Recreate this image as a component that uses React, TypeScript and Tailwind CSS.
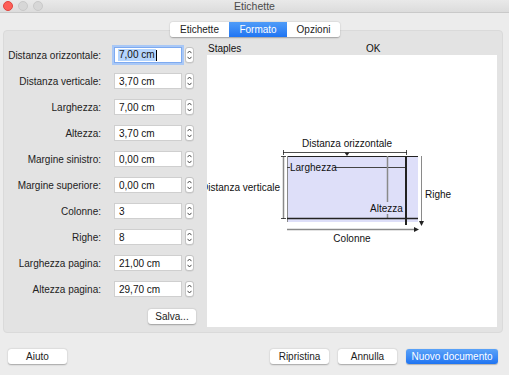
import React from 'react'

const rows = [
  { label: 'Distanza orizzontale:', value: '7,00 cm', focused: true },
  { label: 'Distanza verticale:', value: '3,70 cm' },
  { label: 'Larghezza:', value: '7,00 cm' },
  { label: 'Altezza:', value: '3,70 cm' },
  { label: 'Margine sinistro:', value: '0,00 cm' },
  { label: 'Margine superiore:', value: '0,00 cm' },
  { label: 'Colonne:', value: '3' },
  { label: 'Righe:', value: '8' },
  { label: 'Larghezza pagina:', value: '21,00 cm' },
  { label: 'Altezza pagina:', value: '29,70 cm' },
]

function Spinner() {
  return (
    <div className="ml-[3px] flex h-[16px] w-[9px] flex-col items-center justify-between rounded-[3px] border border-[#c4c4c4] bg-white py-[2px] shadow-[0_0.5px_0.5px_rgba(0,0,0,0.1)]">
      <svg width="5" height="4" viewBox="0 0 5 4">
        <path d="M0.5 3.2 L2.5 1 L4.5 3.2" fill="none" stroke="#333" strokeWidth="0.9" />
      </svg>
      <svg width="5" height="4" viewBox="0 0 5 4">
        <path d="M0.5 0.8 L2.5 3 L4.5 0.8" fill="none" stroke="#333" strokeWidth="0.9" />
      </svg>
    </div>
  )
}

function Field({ label, value, focused }: { label: string; value: string; focused?: boolean }) {
  return (
    <div className="flex h-[16px] items-center">
      <div className="w-[97px] text-right text-[10px] text-[#222]">{label}</div>
      <div
        className={
          focused
            ? 'ml-[13px] flex h-[16px] w-[68px] items-center border border-[#7eaaf0] bg-white pl-[3px] text-[10px] text-[#111] ring-2 ring-[#a9c8f6]'
            : 'ml-[13px] flex h-[16px] w-[68px] items-center border border-[#cfcfcf] bg-white pl-[4px] text-[10px] text-[#111]'
        }
      >
        {focused ? (
          <>
            <span className="bg-[#b5d5fd] px-[1px] leading-[12px]">{value}</span>
            <span className="h-[11px] w-[1px] bg-black" />
          </>
        ) : (
          value
        )}
      </div>
      <Spinner />
    </div>
  )
}

function Diagram() {
  const gray = '#8a8a8a'
  const dark = '#222'
  return (
    <svg width="290" height="272" viewBox="0 0 290 272" className="block" fontFamily="'Liberation Sans', Arial, sans-serif" fontSize="10" fill="#111">
      <rect x="80" y="101" width="131" height="66" fill="#dedff9" />
      <line x1="80" y1="101.5" x2="211" y2="101.5" stroke={dark} strokeWidth="1" />
      <line x1="80.5" y1="101" x2="80.5" y2="167" stroke={gray} strokeWidth="1" />

      {/* Distanza orizzontale */}
      <text x="140" y="92" textAnchor="middle">Distanza orizzontale</text>
      <line x1="76" y1="97.5" x2="200" y2="97.5" stroke={dark} strokeWidth="0.8" />
      <line x1="76.5" y1="95" x2="76.5" y2="100" stroke={dark} strokeWidth="0.8" />
      <line x1="199.5" y1="95" x2="199.5" y2="100" stroke={dark} strokeWidth="0.8" />
      <path d="M137.5 97.5 L142.5 97.5 L140 101 Z" fill={dark} />

      {/* Distanza verticale */}
      <line x1="76.5" y1="101" x2="76.5" y2="164" stroke={gray} strokeWidth="1.5" />
      <line x1="74" y1="101.5" x2="79" y2="101.5" stroke={dark} strokeWidth="0.8" />
      <line x1="74" y1="163.5" x2="79" y2="163.5" stroke={dark} strokeWidth="0.8" />
      <text x="73" y="136" textAnchor="end">Distanza verticale</text>

      {/* Larghezza */}
      <line x1="80" y1="112.5" x2="83" y2="112.5" stroke="#444" strokeWidth="1" />
      <line x1="127" y1="112.5" x2="198" y2="112.5" stroke="#444" strokeWidth="1" />
      <text x="83" y="116">Larghezza</text>

      {/* vertical lines */}
      <line x1="180.5" y1="101" x2="180.5" y2="163" stroke={gray} strokeWidth="1.5" />
      <rect x="162" y="147" width="35" height="12" fill="#dedff9" />
      <text x="163" y="157">Altezza</text>
      <line x1="199" y1="101" x2="199" y2="170" stroke={dark} strokeWidth="2" />
      <line x1="80" y1="163.5" x2="211" y2="163.5" stroke={dark} strokeWidth="1.5" />

      {/* Righe */}
      <line x1="214.5" y1="101" x2="214.5" y2="167" stroke={gray} strokeWidth="1" />
      <path d="M212 166 L217 166 L214.5 171 Z" fill={dark} />
      <text x="218" y="143">Righe</text>

      {/* Colonne */}
      <line x1="80" y1="174.5" x2="208" y2="174.5" stroke={gray} strokeWidth="1.5" />
      <path d="M207 172 L212 174.5 L207 177 Z" fill={dark} />
      <text x="145" y="187" textAnchor="middle">Colonne</text>
    </svg>
  )
}

function Button({ children, primary, className }: { children: React.ReactNode; primary?: boolean; className?: string }) {
  return (
    <div
      className={
        (primary
          ? 'bg-gradient-to-b from-[#5aa2f8] to-[#1f74f2] text-white shadow-[0_0.5px_1px_rgba(0,0,0,0.25)] '
          : 'bg-white text-[#222] shadow-[0_0.5px_1.5px_rgba(0,0,0,0.3)] ') +
        'flex h-[15px] items-center justify-center rounded-[3px] text-[10px] ' +
        (className ?? '')
      }
    >
      {children}
    </div>
  )
}

export default function App() {
  return (
    <div className="flex h-[375px] w-[509px] flex-col overflow-hidden bg-[#ececec] font-['Liberation_Sans',Arial,sans-serif]">
      {/* title bar */}
      <div className="relative flex h-[13px] items-center justify-center border-b border-[#c9c9c9] bg-gradient-to-b from-[#e9e9e9] to-[#dcdcdc]">
        <div className="absolute left-[3px] top-[1px] flex gap-[5px]">
          <div className="h-[10px] w-[10px] rounded-full border border-[#e0443e] bg-[#fd5f57]" />
          <div className="h-[10px] w-[10px] rounded-full border border-[#c9c9c9] bg-[#d7d7d7]" />
          <div className="h-[10px] w-[10px] rounded-full border border-[#c9c9c9] bg-[#d7d7d7]" />
        </div>
        <span className="text-[10.5px] leading-none text-[#4a4a4a]">Etichette</span>
      </div>

      {/* tabs */}
      <div className="relative z-10 mt-[9px] flex h-[15px] justify-center pl-[1px]">
        <div className="flex overflow-hidden rounded-[3px] shadow-[0_0.5px_1.5px_rgba(0,0,0,0.3)]">
          <div className="flex w-[59px] items-center justify-center bg-white text-[10px] text-[#222]">Etichette</div>
          <div className="flex w-[58px] items-center justify-center bg-gradient-to-b from-[#4f9cf8] to-[#1f74f2] text-[10px] text-white">Formato</div>
          <div className="flex w-[53px] items-center justify-center bg-white text-[10px] text-[#222]">Opzioni</div>
        </div>
      </div>

      {/* panel */}
      <div className="mx-[3px] -mt-[7px] flex h-[303px] w-[500px] rounded-[4px] border border-[#dadada] bg-[#e3e3e3]">
        <div className="flex w-[190px] flex-col gap-[10px] pt-[16px]">
          {rows.map((r) => (
            <Field key={r.label} label={r.label} value={r.value} focused={r.focused} />
          ))}
          <Button className="ml-[144px] mt-[2px] w-[48px]">Salva...</Button>
        </div>
        <div className="ml-[13px] flex flex-col pt-[11px]">
          <div className="flex h-[13px] items-center text-[10px] text-[#111]">
            <span className="w-[159px] pl-[1px]">Staples</span>
            <span>OK</span>
          </div>
          <div className="h-[272px] w-[290px] overflow-hidden bg-white">
            <Diagram />
          </div>
        </div>
      </div>

      {/* bottom buttons */}
      <div className="mt-[16px] flex items-center pl-[8px] pr-[11px]">
        <Button className="w-[59px]">Aiuto</Button>
        <div className="flex-1" />
        <Button className="w-[59px]">Ripristina</Button>
        <Button className="ml-[9px] w-[59px]">Annulla</Button>
        <Button primary className="ml-[9px] w-[92px]">Nuovo documento</Button>
      </div>
    </div>
  )
}
